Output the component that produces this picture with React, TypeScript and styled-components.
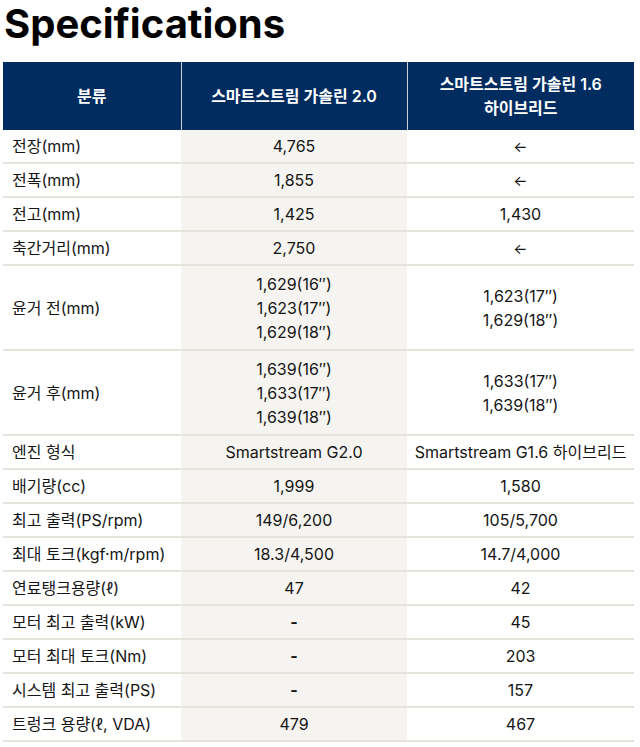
import React from "react";
import styled, { createGlobalStyle } from "styled-components";

const Global = createGlobalStyle`
  html, body { margin: 0; padding: 0; background: #ffffff; }
  body { font-family: "Inter", "Noto Sans CJK KR", sans-serif; color: #151515; }
`;

const Page = styled.div`
  padding: 0 6px 0 3px;
  width: 631px;
`;

const Title = styled.h1`
  margin: 0 0 14px 1px;
  font-family: "Inter", sans-serif;
  font-weight: 700;
  font-size: 40px;
  line-height: 48px;
  color: #000000;
`;

const Table = styled.table`
  width: 631px;
  border-collapse: collapse;
  table-layout: fixed;
  font-family: "Inter", "Noto Sans CJK KR", sans-serif;
  font-size: 16px;
`;

const HeadCell = styled.th<{ $first?: boolean }>`
  height: 68px;
  padding: 0 6px;
  box-sizing: border-box;
  background: #002c5f;
  color: #ffffff;
  font-weight: 600;
  font-size: 16px;
  line-height: 24px;
  text-align: center;
  vertical-align: middle;
  border-left: ${(p) => (p.$first ? "none" : "1px solid #c8d0da")};
`;

const Row = styled.tr`
  border-bottom: 2px solid #e6e2dc;
`;

const Label = styled.td<{ $tall?: boolean }>`
  height: ${(p) => (p.$tall ? "83px" : "32px")};
  padding: 0 0 0 9px;
  line-height: 22px;
  text-align: left;
  vertical-align: middle;
  white-space: nowrap;
`;

const Value = styled.td<{ $tall?: boolean; $shade?: boolean }>`
  height: ${(p) => (p.$tall ? "83px" : "32px")};
  padding: 0 2px;
  line-height: 22px;
  text-align: center;
  vertical-align: middle;
  white-space: nowrap;
  background: ${(p) => (p.$shade ? "#f5f4f0" : "#ffffff")};
`;

const Line = styled.div`
  line-height: 24px;
`;

const Arrow = styled.span`
  font-size: 15px;
`;

const Dash = styled.span`
  font-weight: 700;
`;

type Cell = string | string[];
type Spec = { label: string; a: Cell; b: Cell; tall?: boolean };

const ARROW = "__arrow__";
const DASH = "__dash__";

const specs: Spec[] = [
  { label: "전장(mm)", a: "4,765", b: ARROW },
  { label: "전폭(mm)", a: "1,855", b: ARROW },
  { label: "전고(mm)", a: "1,425", b: "1,430" },
  { label: "축간거리(mm)", a: "2,750", b: ARROW },
  {
    label: "윤거 전(mm)",
    a: ["1,629(16″)", "1,623(17″)", "1,629(18″)"],
    b: ["1,623(17″)", "1,629(18″)"],
    tall: true,
  },
  {
    label: "윤거 후(mm)",
    a: ["1,639(16″)", "1,633(17″)", "1,639(18″)"],
    b: ["1,633(17″)", "1,639(18″)"],
    tall: true,
  },
  { label: "엔진 형식", a: "Smartstream G2.0", b: "Smartstream G1.6 하이브리드" },
  { label: "배기량(cc)", a: "1,999", b: "1,580" },
  { label: "최고 출력(PS/rpm)", a: "149/6,200", b: "105/5,700" },
  { label: "최대 토크(kgf·m/rpm)", a: "18.3/4,500", b: "14.7/4,000" },
  { label: "연료탱크용량(ℓ)", a: "47", b: "42" },
  { label: "모터 최고 출력(kW)", a: DASH, b: "45" },
  { label: "모터 최대 토크(Nm)", a: DASH, b: "203" },
  { label: "시스템 최고 출력(PS)", a: DASH, b: "157" },
  { label: "트렁크 용량(ℓ, VDA)", a: "479", b: "467" },
];

function renderCell(c: Cell) {
  if (Array.isArray(c)) return c.map((l) => <Line key={l}>{l}</Line>);
  if (c === ARROW) return <Arrow>←</Arrow>;
  if (c === DASH) return <Dash>-</Dash>;
  return c;
}

export default function App() {
  return (
    <Page>
      <Global />
      <Title>Specifications</Title>
      <Table>
        <colgroup>
          <col style={{ width: 178 }} />
          <col style={{ width: 226 }} />
          <col style={{ width: 227 }} />
        </colgroup>
        <thead>
          <tr>
            <HeadCell $first>분류</HeadCell>
            <HeadCell>스마트스트림 가솔린 2.0</HeadCell>
            <HeadCell>
              스마트스트림 가솔린 1.6
              <br />
              하이브리드
            </HeadCell>
          </tr>
        </thead>
        <tbody>
          {specs.map((s) => (
            <Row key={s.label}>
              <Label $tall={s.tall}>{s.label}</Label>
              <Value $tall={s.tall} $shade>
                {renderCell(s.a)}
              </Value>
              <Value $tall={s.tall}>{renderCell(s.b)}</Value>
            </Row>
          ))}
        </tbody>
      </Table>
    </Page>
  );
}
